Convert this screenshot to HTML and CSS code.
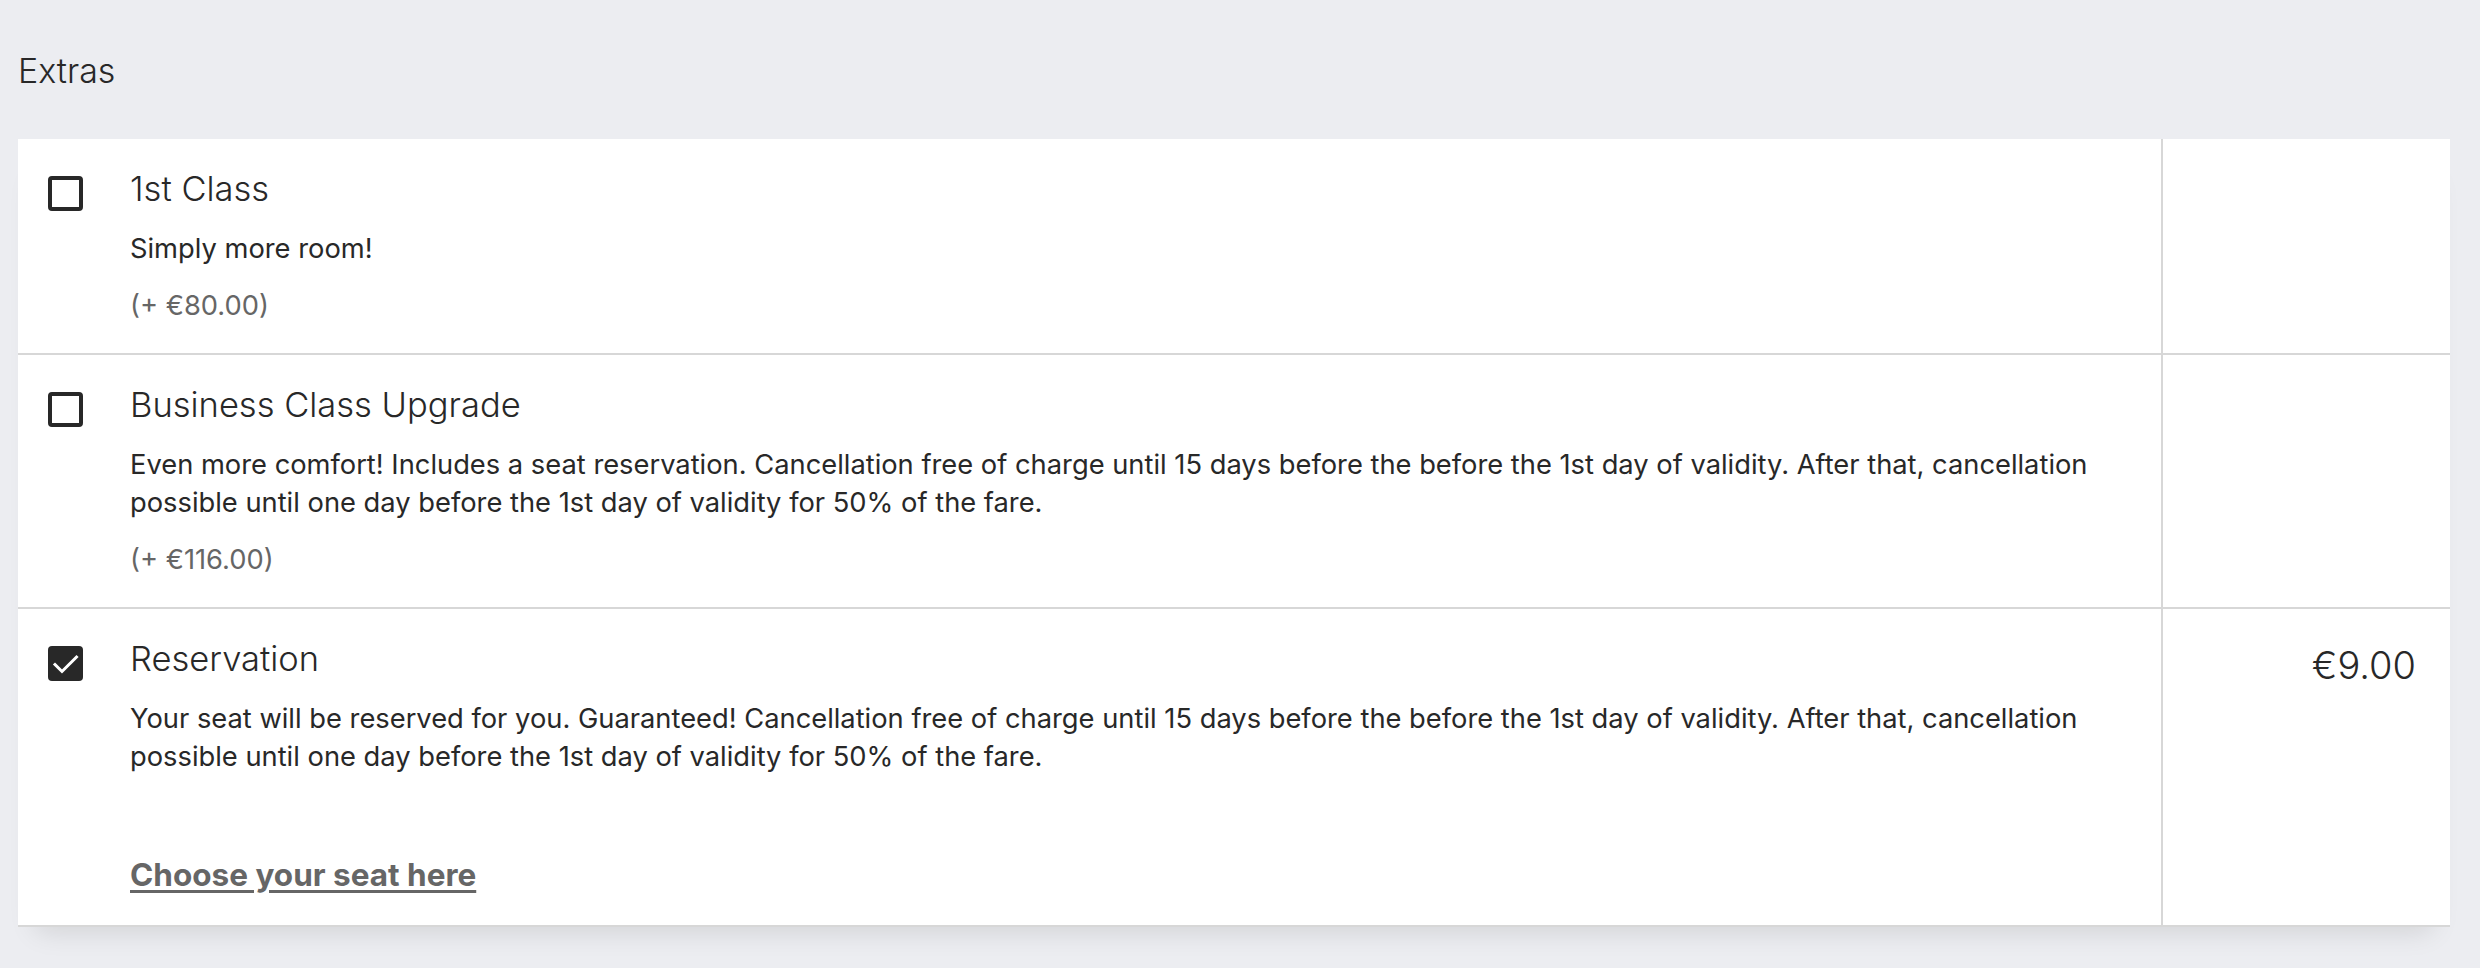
FILE: index.html
```html
<!DOCTYPE html>
<html lang="en">
    <head>
        <meta charset="UTF-8" />
        <meta name="viewport" content="width=device-width, initial-scale=1.0" />
        <title>Extras</title>
        <link rel="stylesheet" href="styles.css">
    </head>
    <body>
        <div id="main">
            <h2 class="section-title">Extras</h2>

            <div class="extras">
                <!-- 1st class -->
                <div class="extra-row">
                    <div class="extra-main">
                        <span class="check"></span>
                        <div class="extra-text">
                            <h3 class="extra-title">1st Class</h3>
                            <p class="extra-desc">Simply more room!</p>
                            <p class="extra-price">(+ €80.00)</p>
                        </div>
                    </div>
                    <div class="extra-total"></div>
                </div>

                <!-- business -->
                <div class="extra-row">
                    <div class="extra-main">
                        <span class="check"></span>
                        <div class="extra-text">
                            <h3 class="extra-title">Business Class Upgrade</h3>
                            <p class="extra-desc">Even more comfort! Includes a seat reservation. Cancellation free of charge until 15 days before the before the 1st day of validity. After that, cancellation possible until one day before the 1st day of validity for 50% of the fare.</p>
                            <p class="extra-price">(+ €116.00)</p>
                        </div>
                    </div>
                    <div class="extra-total"></div>
                </div>

                <!-- reservation (selected) -->
                <div class="extra-row">
                    <div class="extra-main">
                        <span class="check checked">
                            <svg viewBox="0 0 35 35" width="35" height="35">
                                <path d="M7 18.5 L14 25.5 L28.5 11" fill="none" stroke="#fff" stroke-width="3" stroke-linecap="square" />
                            </svg>
                        </span>
                        <div class="extra-text">
                            <h3 class="extra-title">Reservation</h3>
                            <p class="extra-desc">Your seat will be reserved for you. Guaranteed! Cancellation free of charge until 15 days before the before the 1st day of validity. After that, cancellation possible until one day before the 1st day of validity for 50% of the fare.</p>
                            <a class="seat-link" href="#">Choose your seat here</a>
                        </div>
                    </div>
                    <div class="extra-total">€9.00</div>
                </div>
            </div>
        </div>
    </body>
</html>
```

FILE: styles.css
```css
body {
    font-family: "Inter", "Liberation Sans", sans-serif;
    background-color: #ecedf1;
    color: #282828;
    margin: 0;
    padding: 0;
}

#main {
    padding: 50px 30px 40px 18px;
}

.section-title {
    margin: 0 0 47px 0;
    font-size: 34px;
    font-weight: 300;
    line-height: 42px;
}

.extras {
    background-color: #fff;
    border-bottom: 2px solid #d7d7d7;
    box-shadow: 0 22px 26px -18px rgba(0, 0, 0, 0.12);
}

.extra-row {
    display: flex;
}

.extra-row + .extra-row {
    border-top: 2px solid #d7d7d7;
}

.extra-main {
    flex: 1;
    display: flex;
    gap: 47px;
    padding: 29px 40px 28px 30px;
}

.extra-total {
    width: 253px;
    border-left: 2px solid #d7d7d7;
    padding: 32px 34px 0 0;
    text-align: right;
    font-size: 38px;
    font-weight: 300;
    line-height: 48px;
}

/* checkbox */
.check {
    flex: none;
    width: 35px;
    height: 35px;
    margin-top: 8px;
    box-sizing: border-box;
    border: 4px solid #282828;
    border-radius: 4px;
}

.check.checked {
    border: none;
    background-color: #282828;
}

.check svg {
    display: block;
}

.extra-text {
    flex: 1;
}

.extra-title {
    margin: 0;
    font-size: 34.5px;
    font-weight: 300;
    line-height: 42px;
}

.extra-desc {
    margin: 20px 0 0 0;
    font-size: 27.3px;
    line-height: 38px;
}

.extra-price {
    margin: 19px 0 0 0;
    font-size: 27.3px;
    line-height: 38px;
    color: #666;
}

.seat-link {
    display: inline-block;
    margin: 80px 0 3px 0;
    font-size: 31.5px;
    font-weight: 700;
    line-height: 38px;
    color: #666;
    text-decoration: underline;
    text-decoration-thickness: 3px;
    text-underline-offset: 4px;
}
```
